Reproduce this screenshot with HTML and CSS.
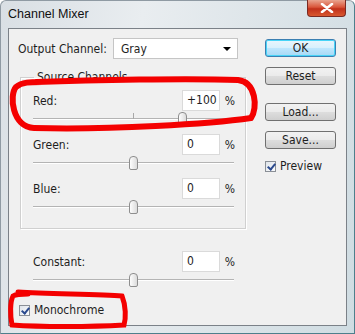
FILE: index.html
```html
<!DOCTYPE html>
<html>
<head>
<meta charset="utf-8">
<title>Channel Mixer</title>
<link rel="stylesheet" href="styles.css">
</head>
<body>
<div class="window">
  <div class="titlebar">
    <span class="title">Channel Mixer</span>
    <div class="close">
      <svg width="14" height="10" viewBox="0 0 14 10">
        <path d="M2 1 L12 9 M12 1 L2 9" stroke="#fff" stroke-width="2.6" stroke-linecap="round"/>
      </svg>
    </div>
  </div>

  <div class="client">
    <div class="left-col">
      <div class="out-row">
        <span class="label">Output Channel:</span>
        <div class="dropdown">
          <span>Gray</span>
          <span class="arrow"></span>
        </div>
      </div>

      <fieldset class="group">
        <legend>Source Channels</legend>

        <div class="channel">
          <div class="chan-row">
            <span class="label">Red:</span>
            <div class="num">+100</div>
            <span class="pct">%</span>
          </div>
          <div class="slider"><div class="tick"></div><div class="thumb" style="left: 145px"></div></div>
        </div>

        <div class="channel">
          <div class="chan-row">
            <span class="label">Green:</span>
            <div class="num">0</div>
            <span class="pct">%</span>
          </div>
          <div class="slider"><div class="thumb" style="left: 96px"></div></div>
        </div>

        <div class="channel">
          <div class="chan-row">
            <span class="label">Blue:</span>
            <div class="num">0</div>
            <span class="pct">%</span>
          </div>
          <div class="slider"><div class="thumb" style="left: 96px"></div></div>
        </div>
      </fieldset>

      <div class="channel constant">
        <div class="chan-row">
          <span class="label">Constant:</span>
          <div class="num">0</div>
          <span class="pct">%</span>
        </div>
        <div class="slider"><div class="thumb" style="left: 96px"></div></div>
      </div>

      <div class="check-row mono">
        <span class="check"></span>
        <span>Monochrome</span>
      </div>
    </div>

    <div class="right-col">
      <div class="btn btn-default">OK</div>
      <div class="btn">Reset</div>
      <div class="btn btn-load">Load...</div>
      <div class="btn">Save...</div>
      <div class="check-row preview">
        <span class="check"></span>
        <span>Preview</span>
      </div>
    </div>
  </div>

  <!-- red marker scribbles over the dialog -->
  <svg class="marks" width="355" height="334" viewBox="0 0 355 334">
    <path d="M36 82 C90 80 190 78 238 80 C256 82 258 108 251 118 C210 124 110 130 34 128 C12 127 9 95 16 87 C22 82 30 82 42 82"
          fill="none" stroke="#f40000" stroke-width="6" stroke-linecap="round"/>
    <path d="M18 292 C50 294 100 294 122 296 C126 306 126 318 124 325 C90 327 40 327 12 325 C10 315 10 302 13 296 C16 294 20 294 28 294"
          fill="none" stroke="#f40000" stroke-width="5" stroke-linecap="round"/>
  </svg>
</div>
</body>
</html>
```

FILE: styles.css
```css
html, body {
  margin: 0;
  padding: 0;
}

body {
  width: 355px;
  height: 334px;
  overflow: hidden;
  font-family: "DejaVu Sans Condensed", "Liberation Sans", sans-serif;
  font-size: 12px;
  color: #1e1e1e;
}

.window {
  position: relative;
  width: 355px;
  height: 334px;
  box-sizing: border-box;
  border: 1px solid #4d7f8c;
  border-top-color: #8f9aa3;
  border-left-color: #8f9aa3;
  border-radius: 6px 6px 0 0;
  background: linear-gradient(100deg, #d9dfe4 0%, #e9edf0 35%, #dfe6ea 60%, #cfdce2 100%);
}

.titlebar {
  height: 27px;
  display: flex;
  align-items: center;
  justify-content: space-between;
  padding-left: 7px;
}

.title {
  font-family: "Liberation Sans", sans-serif;
  font-size: 12.5px;
  color: #111;
  margin-top: -1px;
}

.close {
  align-self: flex-start;
  width: 39px;
  height: 17px;
  margin-right: 8px;
  margin-top: -1px;
  box-sizing: border-box;
  border: 1px solid #7a2a22;
  border-top: none;
  border-radius: 0 0 4px 4px;
  background: linear-gradient(#e9a48f 0%, #d9553a 45%, #c1301a 55%, #d8582f 100%);
  display: flex;
  align-items: center;
  justify-content: center;
}

.client {
  margin: 0 7px 0 7px;
  height: 298px;
  box-sizing: border-box;
  border: 1px solid #7b8188;
  background: #f0f0f0;
  display: flex;
}

.left-col {
  width: 248px;
}

.out-row {
  display: flex;
  align-items: center;
  margin: 9px 0 0 9px;
  height: 21px;
}

.out-row .label {
  width: 95px;
}

.dropdown {
  width: 125px;
  height: 21px;
  box-sizing: border-box;
  border: 1px solid #c5c5c5;
  background: #fff;
  display: flex;
  align-items: center;
  justify-content: space-between;
  padding: 0 6px 0 7px;
}

.arrow {
  width: 0;
  height: 0;
  border-left: 4px solid transparent;
  border-right: 4px solid transparent;
  border-top: 4px solid #000;
}

.group {
  margin: 11px 11px 0 11px;
  padding: 3px 0 14px 12px;
  border: 1px solid #d0d0d0;
  box-shadow: inset 1px 1px 0 #fff, 1px 1px 0 #fff;
  min-width: 0;
}

.group legend {
  margin-left: 1px;
  padding: 0 3px;
  line-height: 14px;
}

.channel {
  margin-top: 8px;
  width: 201px;
}

.group .channel:first-of-type {
  margin-top: 3px;
}

.chan-row {
  display: flex;
  align-items: center;
  height: 21px;
}

.chan-row .label {
  flex: 1;
}

.num {
  width: 38px;
  height: 21px;
  box-sizing: border-box;
  border: 1px solid #dadada;
  background: #fff;
  padding-left: 4px;
  line-height: 19px;
  white-space: nowrap;
}

.pct {
  width: 15px;
  text-align: right;
  margin-right: -1px;
}

.slider {
  position: relative;
  height: 14px;
  margin-top: 1px;
}

.slider::before {
  content: "";
  position: absolute;
  left: 0;
  right: 0;
  top: 6px;
  height: 1px;
  background: #b4b4b4;
  border-bottom: 1px solid #fff;
}

.tick {
  position: absolute;
  left: 100px;
  top: 1px;
  width: 1px;
  height: 6px;
  background: #a8a8a8;
}

.thumb {
  position: absolute;
  top: 0;
  width: 7px;
  height: 12px;
  border: 1px solid #8e8e8e;
  border-radius: 4px 4px 2px 2px;
  background: linear-gradient(90deg, #fdfdfd, #dcdcdc);
}

.constant {
  margin: 22px 0 0 24px;
}

.check-row {
  display: flex;
  align-items: center;
}

.check {
  width: 11px;
  height: 11px;
  box-sizing: border-box;
  border: 1px solid #8a8f96;
  background: linear-gradient(135deg, #dfe4ea, #fbfcfd);
  margin-right: 4px;
  position: relative;
}

.check::after {
  content: "";
  position: absolute;
  left: 3px;
  top: 0;
  width: 3px;
  height: 6px;
  border-right: 2px solid #2b4a8e;
  border-bottom: 2px solid #2b4a8e;
  transform: rotate(40deg);
}

.mono {
  margin: 16px 0 0 10px;
}

.right-col {
  margin-left: 8px;
  padding-top: 10px;
  width: 71px;
}

.btn {
  height: 18px;
  box-sizing: border-box;
  border: 1px solid #707070;
  border-radius: 3px;
  background: linear-gradient(#f2f2f2 0%, #ebebeb 48%, #dddddd 52%, #cfcfcf 100%);
  text-align: center;
  line-height: 16px;
  margin-bottom: 10px;
}

.btn-default {
  border-color: #3c7fb1;
  box-shadow: inset 0 0 0 1px #48d4f7;
  background: linear-gradient(#eaf6fd 0%, #d9f0fc 48%, #bee6fd 52%, #a7d9f5 100%);
}

.btn-load {
  margin-top: 18px;
}

.preview {
  margin-top: 6px;
}

.marks {
  position: absolute;
  left: -1px;
  top: -1px;
  pointer-events: none;
}
```
